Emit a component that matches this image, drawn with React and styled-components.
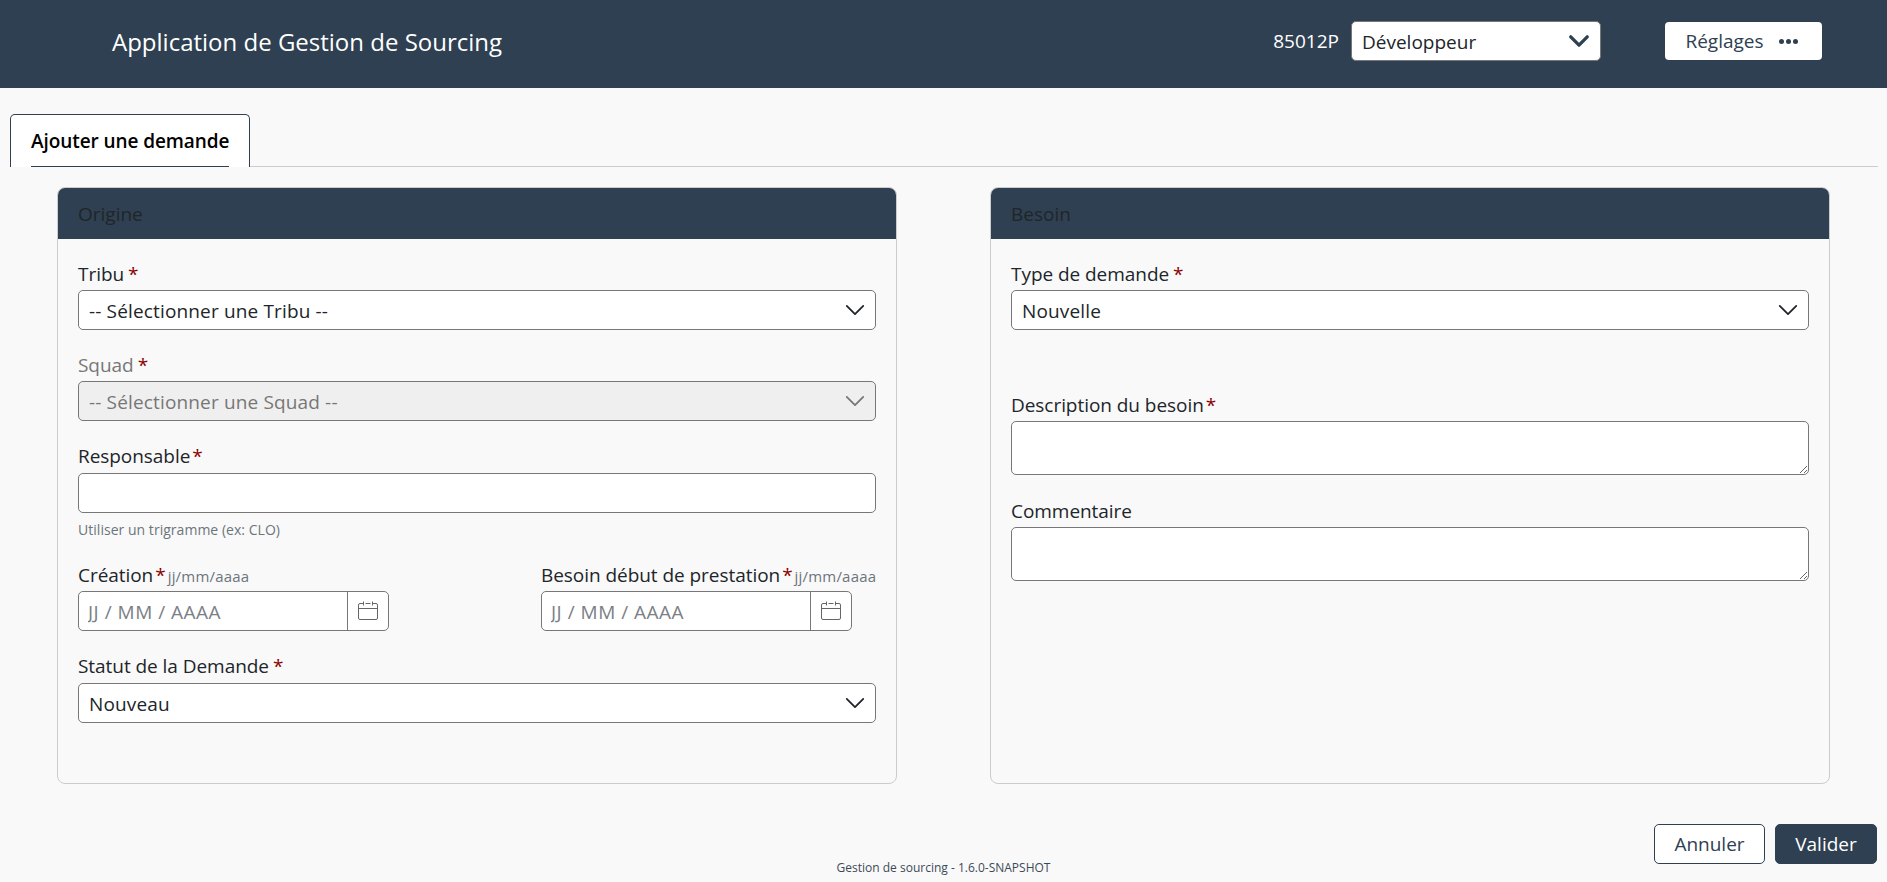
import styled, { createGlobalStyle } from "styled-components";

const GlobalStyle = createGlobalStyle`
  html, body {
    margin: 0;
    padding: 0;
    background: #f9f9f9;
    color: #212529;
    font-family: "Open Sans", "Noto Sans", sans-serif;
    font-size: 19px;
  }
  * { box-sizing: border-box; }
`;

const dark = "#2e4051";
const chevron = (color, width) =>
  `url("data:image/svg+xml,%3Csvg xmlns='http://www.w3.org/2000/svg' viewBox='0 0 16 16'%3E%3Cpath fill='none' stroke='${color}' stroke-linecap='round' stroke-linejoin='round' stroke-width='${width}' d='m2 5 6 6 6-6'/%3E%3C/svg%3E")`;

const Page = styled.div`
  height: 882px;
  overflow: hidden;
  display: flex;
  flex-direction: column;
`;

const Header = styled.header`
  height: 88px;
  flex: none;
  background: ${dark};
  color: #fff;
  display: flex;
  align-items: center;
  padding: 0 65px 6px 112px;
`;

const AppTitle = styled.div`
  font-size: 24px;
  margin-right: auto;
`;

const UserCode = styled.span`
  margin-right: 12px;
`;

const RoleSelect = styled.select`
  width: 250px;
  height: 40px;
  padding: 2px 40px 0 10px;
  border: 1px solid #777;
  border-radius: 5px;
  font: inherit;
  color: #212529;
  appearance: none;
  background: #fff ${chevron("%232e4051", 2.4)} no-repeat right 10px center / 22px 22px;
`;

const SettingsButton = styled.button`
  width: 157px;
  height: 38px;
  margin-left: 64px;
  padding: 0 4px 0 0;
  display: flex;
  align-items: center;
  justify-content: center;
  gap: 15px;
  border: 0;
  border-radius: 4px;
  background: #fff;
  color: ${dark};
  font: inherit;
`;

const Dots = styled.span`
  display: flex;
  gap: 2px;
  i {
    width: 5px;
    height: 5px;
    border-radius: 50%;
    background: ${dark};
  }
`;

const TabBar = styled.nav`
  margin: 26px 9px 0 10px;
  height: 53px;
  flex: none;
  border-bottom: 1px solid #ccc;
`;

const Tab = styled.div`
  display: inline-block;
  height: 53px;
  padding: 0 20px;
  background: #fff;
  border: 1px solid ${dark};
  border-bottom: 0;
  border-radius: 5px 5px 0 0;
`;

const TabLabel = styled.span`
  display: block;
  height: 100%;
  line-height: 53px;
  font-weight: 600;
  letter-spacing: -0.08px;
  color: #000;
  border-bottom: 1px solid ${dark};
`;

const Columns = styled.main`
  display: grid;
  grid-template-columns: 840px 840px;
  justify-content: space-between;
  padding: 20px 57px 0 57px;
`;

const Card = styled.section`
  height: 597px;
  border: 1px solid #ccc;
  border-radius: 8px;
  overflow: hidden;
`;

const CardTitle = styled.h2`
  margin: 0;
  height: 51px;
  padding: 0 20px;
  background: ${dark};
  color: #212529;
  font-size: 19px;
  font-weight: 400;
  line-height: 53px;
`;

const CardBody = styled.div`
  padding: 22px 20px 0;
  display: flex;
  flex-direction: column;
`;

const Field = styled.div`
  margin-bottom: ${(p) => p.$gap ?? 23}px;
`;

const Label = styled.label`
  display: block;
  height: 25px;
  line-height: 27px;
  margin-bottom: ${(p) => p.$gap ?? 4}px;
  letter-spacing: -0.05px;
  color: ${(p) => (p.$disabled ? "#777" : "#212529")};
  white-space: nowrap;
`;

const Star = styled.span`
  color: #8b0000;
  margin-left: ${(p) => (p.$tight ? 2 : 4)}px;
`;

const Format = styled.small`
  font-size: 15px;
  letter-spacing: 0.2px;
  color: #6c757d;
  margin-left: 2px;
`;

const Select = styled.select`
  display: block;
  width: 100%;
  height: 40px;
  padding: 2px 40px 0 10px;
  border: 1px solid #777;
  border-radius: 5px;
  font: inherit;
  letter-spacing: 0.15px;
  color: ${(p) => (p.disabled ? "#777" : "#212529")};
  opacity: 1;
  appearance: none;
  background: ${(p) => (p.disabled ? "#efefef" : "#fff")}
    ${(p) => chevron(p.disabled ? "%23777" : "%23212529", 1.3)} no-repeat right 9px center / 22px 22px;
`;

const TextInput = styled.input`
  display: block;
  width: 100%;
  height: 40px;
  padding: 0 10px;
  border: 1px solid #777;
  border-radius: 5px;
  background: #fff;
  font: inherit;
`;

const Hint = styled.div`
  font-size: 14px;
  letter-spacing: 0.03px;
  color: #6c757d;
  margin-top: 7px;
  height: 19px;
  line-height: 19px;
  margin-bottom: 1px;
`;

const DateRow = styled.div`
  display: grid;
  grid-template-columns: 463px 1fr;
  margin-bottom: 22px;
`;

const DateCol = styled.div`
  min-width: 0;
`;

const DateGroup = styled.div`
  display: flex;
  width: 311px;
  height: 40px;
  background: #fff;
  border: 1px solid #777;
  border-radius: 5px;
  overflow: hidden;
`;

const DateInput = styled.input`
  flex: 1;
  min-width: 0;
  padding: 1px 9px 0;
  border: 0;
  outline: 0;
  background: transparent;
  font: inherit;
  letter-spacing: 0.5px;
  &::placeholder {
    color: #7b8086;
    opacity: 1;
  }
`;

const DateAddon = styled.span`
  width: 41px;
  flex: none;
  display: flex;
  align-items: center;
  justify-content: center;
  border-left: 1px solid #777;
  color: #666;
`;

const TextArea = styled.textarea`
  display: block;
  width: 100%;
  height: ${(p) => p.$height}px;
  padding: 6px 10px;
  border: 1px solid #777;
  border-radius: 5px;
  background: #fff;
  font: inherit;
  resize: vertical;
`;

const BottomBar = styled.footer`
  display: grid;
  grid-template-columns: 1fr auto 1fr;
  padding: 40px 10px 0;
`;

const Version = styled.div`
  grid-column: 2;
  font-size: 12px;
  color: #3c4a57;
  margin-top: 36px;
  line-height: 16px;
`;

const Actions = styled.div`
  grid-column: 3;
  justify-self: end;
  display: flex;
  gap: 10px;
`;

const ActionButton = styled.button`
  height: 40px;
  width: ${(p) => p.$width}px;
  border-radius: 5px;
  border: 1px solid ${dark};
  background: ${(p) => (p.$primary ? dark : "#fff")};
  color: ${(p) => (p.$primary ? "#fff" : dark)};
  font: inherit;
`;

function CalendarIcon() {
  return (
    <svg width="22" height="22" viewBox="0 0 22 22" fill="none" stroke="currentColor" strokeWidth="1">
      <path d="M6.5 3.5H3a1.5 1.5 0 0 0-1.5 1.5v13A1.5 1.5 0 0 0 3 19.5h16a1.5 1.5 0 0 0 1.5-1.5V5A1.5 1.5 0 0 0 19 3.5h-3.5M8.5 3.5h5" />
      <path d="M1.5 8.5h19M6.5 1.5v4M15.5 1.5v4" />
    </svg>
  );
}

function DateField({ label }) {
  return (
    <DateCol>
      <Label>
        {label}
        <Star $tight>*</Star>
        <Format>jj/mm/aaaa</Format>
      </Label>
      <DateGroup>
        <DateInput placeholder="JJ / MM / AAAA" />
        <DateAddon>
          <CalendarIcon />
        </DateAddon>
      </DateGroup>
    </DateCol>
  );
}

export default function App() {
  return (
    <Page>
      <GlobalStyle />
      <Header>
        <AppTitle>Application de Gestion de Sourcing</AppTitle>
        <UserCode>85012P</UserCode>
        <RoleSelect defaultValue="dev">
          <option value="dev">Développeur</option>
        </RoleSelect>
        <SettingsButton>
          Réglages
          <Dots>
            <i />
            <i />
            <i />
          </Dots>
        </SettingsButton>
      </Header>

      <TabBar>
        <Tab>
          <TabLabel>Ajouter une demande</TabLabel>
        </Tab>
      </TabBar>

      <Columns>
        <Card>
          <CardTitle>Origine</CardTitle>
          <CardBody>
            <Field $gap={22}>
              <Label>
                Tribu<Star>*</Star>
              </Label>
              <Select>
                <option>-- Sélectionner une Tribu --</option>
              </Select>
            </Field>
            <Field $gap={22}>
              <Label $disabled>
                Squad<Star>*</Star>
              </Label>
              <Select disabled>
                <option>-- Sélectionner une Squad --</option>
              </Select>
            </Field>
            <Field $gap={22}>
              <Label $gap={5}>
                Responsable<Star $tight>*</Star>
              </Label>
              <TextInput />
              <Hint>Utiliser un trigramme (ex: CLO)</Hint>
            </Field>
            <DateRow>
              <DateField label="Création" />
              <DateField label="Besoin début de prestation" />
            </DateRow>
            <Field>
              <Label $gap={5}>
                Statut de la Demande<Star>*</Star>
              </Label>
              <Select>
                <option>Nouveau</option>
              </Select>
            </Field>
          </CardBody>
        </Card>

        <Card>
          <CardTitle>Besoin</CardTitle>
          <CardBody>
            <Field $gap={62}>
              <Label>
                Type de demande<Star>*</Star>
              </Label>
              <Select>
                <option>Nouvelle</option>
              </Select>
            </Field>
            <Field $gap={23}>
              <Label>
                Description du besoin<Star $tight>*</Star>
              </Label>
              <TextArea $height={54} />
            </Field>
            <Field $gap={23}>
              <Label>Commentaire</Label>
              <TextArea $height={54} />
            </Field>
          </CardBody>
        </Card>
      </Columns>

      <BottomBar>
        <Version>Gestion de sourcing - 1.6.0-SNAPSHOT</Version>
        <Actions>
          <ActionButton $width={111}>Annuler</ActionButton>
          <ActionButton $primary $width={102}>
            Valider
          </ActionButton>
        </Actions>
      </BottomBar>
    </Page>
  );
}
